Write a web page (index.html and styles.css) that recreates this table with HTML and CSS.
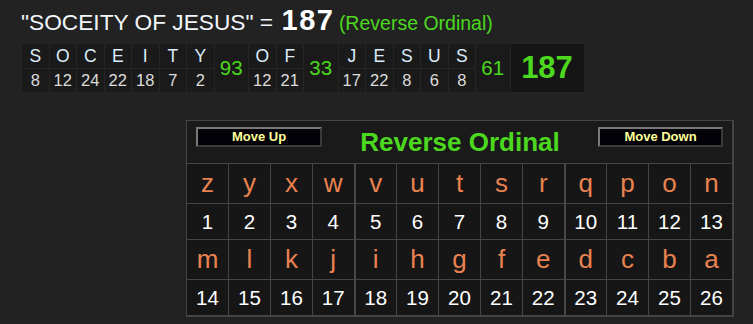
FILE: index.html
```html
<!DOCTYPE html>
<html>
<head>
<meta charset="utf-8">
<link rel="stylesheet" href="styles.css">
</head>
<body>
<div class="page">
  <div class="title">
    <span class="phrase">"SOCEITY OF JESUS" =</span>
    <span class="sum">187</span>
    <span class="cipher">(Reverse Ordinal)</span>
  </div>

  <table class="breakdown">
    <tr class="letters">
      <td class="l">S</td><td class="l">O</td><td class="l">C</td><td class="l">E</td><td class="l">I</td><td class="l">T</td><td class="l">Y</td>
      <td class="sub" rowspan="2">93</td>
      <td class="l">O</td><td class="l">F</td>
      <td class="sub" rowspan="2">33</td>
      <td class="l">J</td><td class="l">E</td><td class="l">S</td><td class="l">U</td><td class="l">S</td>
      <td class="sub" rowspan="2">61</td>
      <td class="tot" rowspan="2">187</td>
    </tr>
    <tr class="nums">
      <td>8</td><td>12</td><td>24</td><td>22</td><td>18</td><td>7</td><td>2</td>
      <td>12</td><td>21</td>
      <td>17</td><td>22</td><td>8</td><td>6</td><td>8</td>
    </tr>
  </table>

  <table class="chart">
    <tr class="head">
      <td colspan="13">
        <div class="headbar">
          <button class="btn">Move Up</button>
          <span class="charttitle">Reverse Ordinal</span>
          <button class="btn down">Move Down</button>
        </div>
      </td>
    </tr>
    <tr class="lrow">
      <td>z</td><td>y</td><td>x</td><td>w</td><td class="grp">v</td><td>u</td><td>t</td><td>s</td><td>r</td><td class="grp">q</td><td>p</td><td>o</td><td>n</td>
    </tr>
    <tr class="nrow">
      <td>1</td><td>2</td><td>3</td><td>4</td><td class="grp">5</td><td>6</td><td>7</td><td>8</td><td>9</td><td class="grp">10</td><td>11</td><td>12</td><td>13</td>
    </tr>
    <tr class="lrow">
      <td>m</td><td>l</td><td>k</td><td>j</td><td class="grp">i</td><td>h</td><td>g</td><td>f</td><td>e</td><td class="grp">d</td><td>c</td><td>b</td><td>a</td>
    </tr>
    <tr class="nrow last">
      <td>14</td><td>15</td><td>16</td><td>17</td><td class="grp">18</td><td>19</td><td>20</td><td>21</td><td>22</td><td class="grp">23</td><td>24</td><td>25</td><td>26</td>
    </tr>
  </table>
</div>
</body>
</html>
```

FILE: styles.css
```css
html, body {
  margin: 0;
  padding: 0;
  background: #222222;
}
body {
  font-family: "Liberation Sans", Arial, sans-serif;
  color: #ffffff;
}
.page {
  padding: 8px 0 0 21px;
}
.title {
  height: 26px;
  line-height: 24px;
  white-space: nowrap;
}
.phrase {
  font-size: 22.7px;
  color: #f2f6fa;
}
.sum {
  font-size: 29px;
  font-weight: bold;
  color: #ffffff;
  letter-spacing: 1.5px;
  margin-left: 4px;
}
.cipher {
  font-size: 19.5px;
  color: #4cd81e;
}
.breakdown {
  margin-top: 9px;
  border-collapse: collapse;
  table-layout: fixed;
  background: #1a1a1a;
}
.breakdown td {
  padding: 0;
  text-align: center;
  border: 1px solid #252525;
  font-size: 16px;
}
.breakdown .letters td {
  height: 24px;
}
.breakdown .nums td {
  height: 23px;
  color: #dddddd;
  font-size: 16.5px;
}
.breakdown .l {
  width: 26.5px;
  color: #dcecfa;
  font-size: 17.5px;
}
.breakdown .sub {
  width: 33.5px;
  color: #4cd81e;
  font-size: 20.5px;
}
.breakdown .tot {
  width: 73px;
  color: #4cd81e;
  font-size: 31px;
  font-weight: bold;
  background: #151515;
}
.chart {
  margin: 27px 0 0 165px;
  border-collapse: collapse;
  table-layout: fixed;
  width: 548px;
  background: #161616;
  border-top: 1px solid #444;
  border-left: 1px solid #444;
  border-right: 2px solid #444;
  border-bottom: 2px solid #444;
}
.chart td {
  padding: 0;
  width: 42px;
  text-align: center;
  border: 1px solid #444;
}
.chart td.grp {
  border-left: 2px solid #484848;
}
.chart .head td {
  height: 42px;
  vertical-align: top;
  background: #1a1a1a;
}
.headbar {
  display: flex;
  justify-content: space-between;
  align-items: flex-start;
  padding: 6px 9px 0 9px;
}
.btn {
  width: 126px;
  height: 20px;
  padding: 0;
  margin: 0;
  background: #020208;
  border: 2px solid;
  border-color: #7a7a7a #3a3a3a #3a3a3a #7a7a7a;
  color: #ffff99;
  font-family: "Liberation Sans", Arial, sans-serif;
  font-weight: bold;
  font-size: 13px;
  line-height: 16px;
}
.btn.down {
  width: 125px;
}
.charttitle {
  font-size: 26px;
  font-weight: bold;
  color: #4cd81e;
  line-height: 29px;
  margin-top: 1px;
}
.chart .lrow td {
  height: 39px;
  color: #ea8250;
  font-size: 26px;
}
.chart .nrow td {
  height: 35px;
  color: #ffffff;
  font-size: 20.5px;
}
.chart .nrow.last td {
  height: 35px;
}
```
